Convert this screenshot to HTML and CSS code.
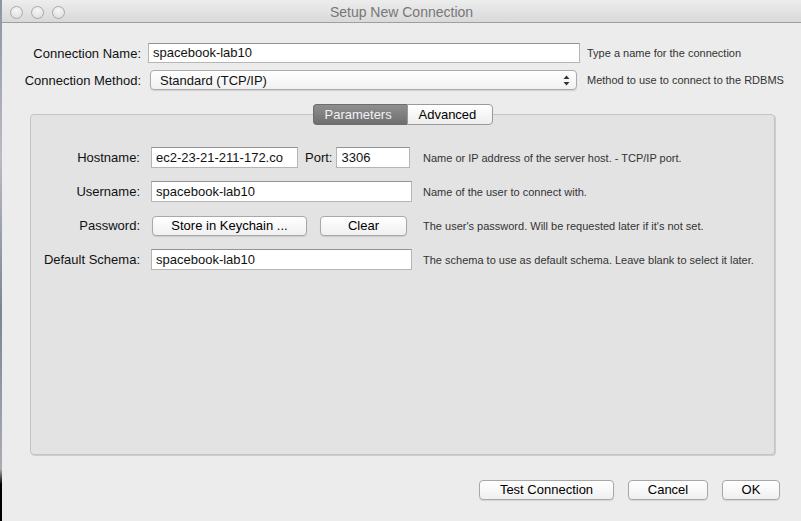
FILE: index.html
```html
<!DOCTYPE html>
<html>
<head>
<meta charset="utf-8">
<title>Setup New Connection</title>
<link rel="stylesheet" href="styles.css">
</head>
<body>
<div class="strip"></div>
<div class="window">
  <div class="titlebar">
    <div class="lights">
      <span class="light"></span><span class="light"></span><span class="light"></span>
    </div>
    <div class="title">Setup New Connection</div>
  </div>
  <div class="content">
    <div class="topform">
      <label class="lbl">Connection Name:</label>
      <div class="field name-field">spacebook-lab10</div>
      <div class="help">Type a name for the connection</div>

      <label class="lbl">Connection Method:</label>
      <div class="select">
        <span>Standard (TCP/IP)</span>
        <svg class="stepper" width="7" height="11" viewBox="0 0 7 11"><path d="M3.5 0.5 L6.5 4 L0.5 4 Z" fill="#333"/><path d="M0.5 7 L6.5 7 L3.5 10.5 Z" fill="#333"/></svg>
      </div>
      <div class="help">Method to use to connect to the RDBMS</div>
    </div>

    <div class="tabarea">
      <div class="tabs">
        <div class="tab active">Parameters</div>
        <div class="tab">Advanced</div>
      </div>
      <div class="panel">
        <div class="pform">
          <label class="lbl">Hostname:</label>
          <div class="hostline">
            <div class="field host">ec2-23-21-211-172.co</div>
            <span class="portlbl">Port:</span>
            <div class="field port">3306</div>
          </div>
          <div class="help">Name or IP address of the server host. - TCP/IP port.</div>

          <label class="lbl">Username:</label>
          <div class="field">spacebook-lab10</div>
          <div class="help">Name of the user to connect with.</div>

          <label class="lbl">Password:</label>
          <div class="btnline">
            <button class="btn keychain">Store in Keychain ...</button>
            <button class="btn clear">Clear</button>
          </div>
          <div class="help">The user's password. Will be requested later if it's not set.</div>

          <label class="lbl">Default Schema:</label>
          <div class="field">spacebook-lab10</div>
          <div class="help">The schema to use as default schema. Leave blank to select it later.</div>
        </div>
      </div>
    </div>

    <div class="actions">
      <button class="btn test">Test Connection</button>
      <button class="btn cancel">Cancel</button>
      <button class="btn ok">OK</button>
    </div>
  </div>
</div>
</body>
</html>
```

FILE: styles.css
```css
html, body {
  margin: 0;
  padding: 0;
}
body {
  width: 801px;
  height: 521px;
  display: flex;
  overflow: hidden;
  font-family: "Liberation Sans", Arial, sans-serif;
  font-size: 13px;
  color: #111;
}
.strip {
  width: 2px;
  background: linear-gradient(#8d959f 0%, #b8bcc2 30%, #7d8590 60%, #a8adb3 90%, #000 93%, #000 100%);
}
.window {
  flex: 1;
  background: #ececec;
  display: flex;
  flex-direction: column;
}
.titlebar {
  height: 22px;
  border-bottom: 1px solid #9f9f9f;
  background: linear-gradient(#ededed, #d9d9d9);
  position: relative;
  display: flex;
  align-items: center;
  justify-content: center;
}
.lights {
  position: absolute;
  left: 8px;
  top: 6px;
  display: flex;
  gap: 8px;
}
.light {
  width: 11px;
  height: 11px;
  border-radius: 50%;
  border: 1px solid #a9a9a9;
  background: radial-gradient(circle at 50% 30%, #f6f6f6, #dcdcdc);
}
.title {
  font-size: 14px;
  color: #777;
  padding-top: 2px;
}
.content {
  flex: 1;
  display: flex;
  flex-direction: column;
}
.topform {
  display: grid;
  grid-template-columns: 139px 432px auto;
  column-gap: 7px;
  row-gap: 7px;
  margin-top: 20px;
  align-items: center;
}
.lbl {
  text-align: right;
  white-space: nowrap;
  color: #111;
}
.help {
  font-size: 11px;
  color: #333;
  white-space: nowrap;
}
.field {
  height: 19px;
  background: #fff;
  border: 1px solid #b5b5b5;
  border-top-color: #939393;
  padding-left: 4px;
  line-height: 19px;
  overflow: hidden;
  white-space: nowrap;
  box-sizing: content-box;
}
.name-field {
  height: 18px;
  line-height: 18px;
}
.select {
  height: 18px;
  margin: 0 3px 0 2px;
  border: 1px solid #ababab;
  border-radius: 4px;
  background: linear-gradient(#ffffff, #f1f1f1);
  box-shadow: 0 1px 1px rgba(0, 0, 0, 0.12);
  display: flex;
  align-items: center;
  justify-content: space-between;
  padding: 0 6px 0 9px;
  font-size: 13px;
}
.stepper {
  display: block;
}
.tabarea {
  margin-top: 14px;
  margin-left: 28px;
  width: 745px;
  display: flex;
  flex-direction: column;
}
.tabs {
  display: flex;
  justify-content: center;
  position: relative;
  z-index: 1;
  margin-bottom: -11px;
  height: 21px;
}
.tab {
  height: 19px;
  line-height: 19px;
  padding: 0 11px;
  border: 1px solid #9a9a9a;
  background: linear-gradient(#ffffff, #eeeeee);
  color: #000;
  font-size: 13px;
}
.tab.active {
  width: 71px;
  border-color: #6d6d6d;
  border-radius: 4px 0 0 4px;
  background: linear-gradient(#8f8f8f, #6f6f6f);
  color: #f2f2f2;
  border-right: none;
}
.tab:last-child {
  width: 62px;
  border-radius: 0 4px 4px 0;
}
.panel {
  height: 339px;
  background: #e3e3e3;
  border: 1px solid #c4c4c4;
  border-radius: 4px;
  box-shadow: 1px 1px 0 #cdcdcd;
}
.pform {
  display: grid;
  grid-template-columns: 109px 261px auto;
  column-gap: 11px;
  grid-auto-rows: 21px;
  row-gap: 13px;
  margin-top: 32px;
  align-items: center;
}
.pform .field {
  height: 19px;
  line-height: 19px;
}
.hostline {
  display: flex;
  align-items: center;
}
.hostline .host {
  width: 141px;
}
.portlbl {
  margin-left: 7px;
  margin-right: 4px;
}
.hostline .port {
  width: 68px;
}
.btnline {
  display: flex;
  align-items: center;
}
.btn {
  height: 20px;
  font-family: "Liberation Sans", Arial, sans-serif;
  font-size: 13px;
  color: #000;
  border: 1px solid #a8a8a8;
  border-radius: 4px;
  background: linear-gradient(#ffffff, #f0f0f0);
  box-shadow: 0 1px 1px rgba(0, 0, 0, 0.1);
  padding: 0;
  margin: 0;
  line-height: 18px;
}
.keychain {
  width: 155px;
  margin-left: 1px;
}
.clear {
  width: 87px;
  margin-left: 13px;
}
.actions {
  display: flex;
  justify-content: flex-end;
  gap: 14px;
  margin-top: 25px;
  padding-right: 21px;
}
.test {
  width: 135px;
}
.cancel {
  width: 80px;
}
.ok {
  width: 58px;
}
```
